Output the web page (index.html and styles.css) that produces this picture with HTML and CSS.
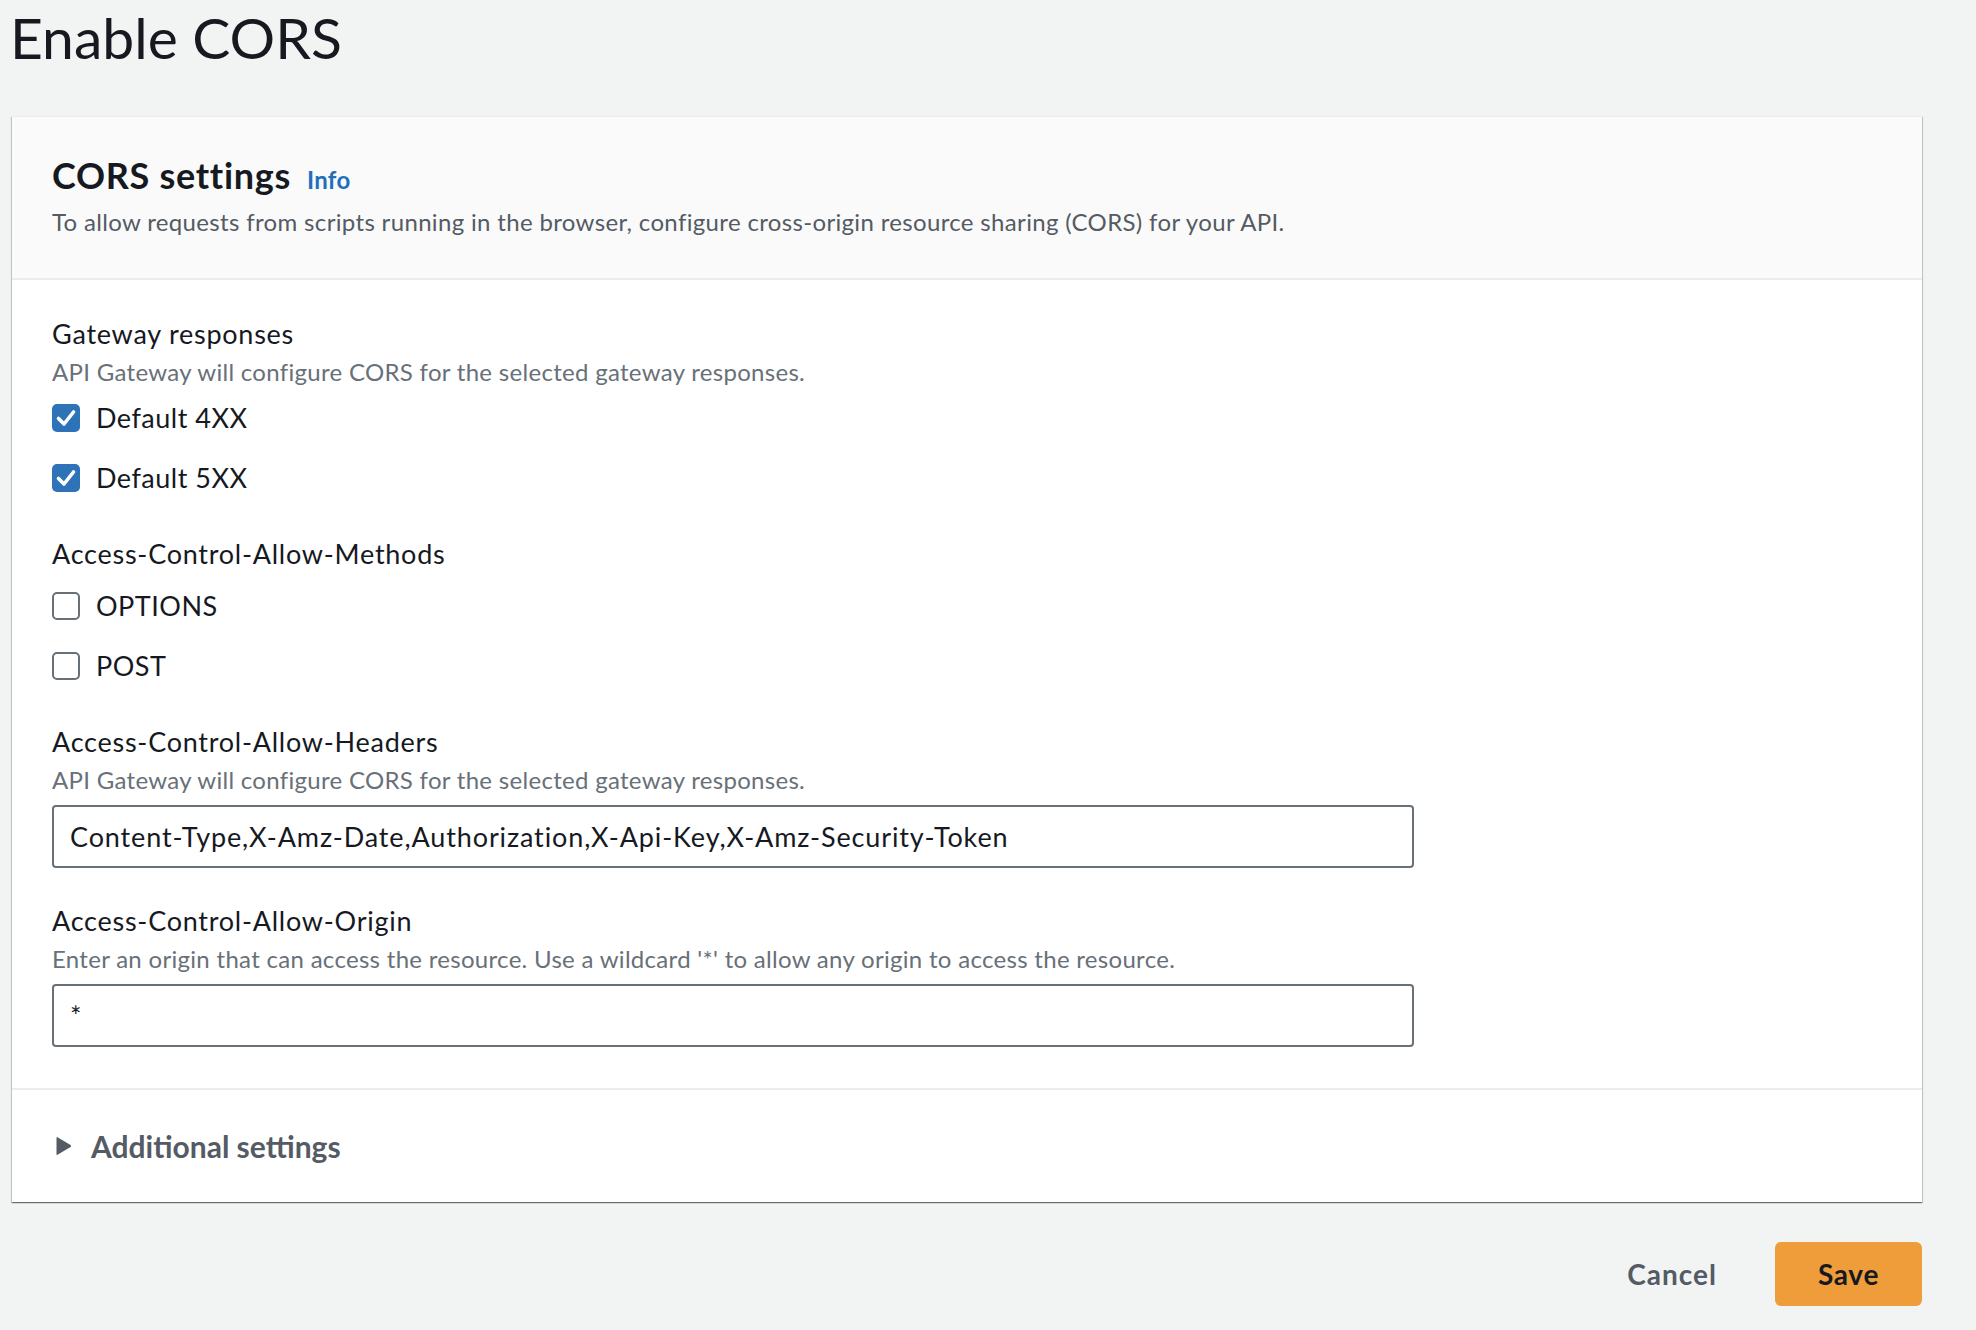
FILE: index.html
```html
<!DOCTYPE html>
<html lang="en">
<head>
<meta charset="utf-8">
<title>Enable CORS</title>
<link rel="stylesheet" href="styles.css">
</head>
<body>
<div class="page">
  <h1 class="title">Enable CORS</h1>

  <section class="card">
    <header class="card-header">
      <h2 class="card-title"><span>CORS settings</span><a class="info" href="#">Info</a></h2>
      <p class="card-desc">To allow requests from scripts running in the browser, configure cross-origin resource sharing (CORS) for your API.</p>
    </header>

    <div class="card-body">
      <div class="field field-first">
        <div class="label">Gateway responses</div>
        <div class="hint">API Gateway will configure CORS for the selected gateway responses.</div>
        <div class="checks checks-hinted">
          <label class="check">
            <span class="box box-checked"><svg viewBox="0 0 28 28" width="28" height="28"><polyline points="6.5,14.5 12,20 21.5,8" fill="none" stroke="#fff" stroke-width="3.6" stroke-linecap="round" stroke-linejoin="round"/></svg></span>
            <span class="check-text">Default 4XX</span>
          </label>
          <label class="check">
            <span class="box box-checked"><svg viewBox="0 0 28 28" width="28" height="28"><polyline points="6.5,14.5 12,20 21.5,8" fill="none" stroke="#fff" stroke-width="3.6" stroke-linecap="round" stroke-linejoin="round"/></svg></span>
            <span class="check-text">Default 5XX</span>
          </label>
        </div>
      </div>

      <div class="field field-gap">
        <div class="label">Access-Control-Allow-Methods</div>
        <div class="checks checks-plain">
          <label class="check">
            <span class="box"></span>
            <span class="check-text">OPTIONS</span>
          </label>
          <label class="check">
            <span class="box"></span>
            <span class="check-text">POST</span>
          </label>
        </div>
      </div>

      <div class="field field-gap">
        <div class="label">Access-Control-Allow-Headers</div>
        <div class="hint">API Gateway will configure CORS for the selected gateway responses.</div>
        <div class="input">Content-Type,X-Amz-Date,Authorization,X-Api-Key,X-Amz-Security-Token</div>
      </div>

      <div class="field field-after-input">
        <div class="label">Access-Control-Allow-Origin</div>
        <div class="hint">Enter an origin that can access the resource. Use a wildcard '*' to allow any origin to access the resource.</div>
        <div class="input">*</div>
      </div>
    </div>

    <div class="card-footer">
      <div class="expander">
        <svg class="caret" viewBox="0 0 16 20" width="16" height="20"><path d="M1.5 1.2 L14.6 9 Q15.6 10 14.6 11 L1.5 18.8 Q0.5 19.3 0.5 18 L0.5 2 Q0.5 0.7 1.5 1.2 Z" fill="#545b64"/></svg>
        <span class="expander-text">Additional settings</span>
      </div>
    </div>
  </section>

  <div class="actions">
    <button class="btn btn-link" type="button">Cancel</button>
    <button class="btn btn-primary" type="button">Save</button>
  </div>
</div>
</body>
</html>
```

FILE: styles.css
```css
* { box-sizing: border-box; }

html, body {
  margin: 0;
  padding: 0;
  background: #f2f3f3;
}

body {
  font-family: Lato, "Open Sans", "Noto Sans", sans-serif;
  color: #16191f;
}

.page {
  padding: 5px 54px 0 12px;
}

.title {
  margin: 0 0 47px -2px;
  font-size: 57px;
  line-height: 64px;
  font-weight: 400;
  color: #16191f;
}

.card {
  background: #ffffff;
  border-top: 1px solid #eaeded;
  box-shadow: 0 1px 1px 0 rgba(0, 28, 36, 0.45), 1px 1px 1px 0 rgba(0, 28, 36, 0.15), -1px 1px 1px 0 rgba(0, 28, 36, 0.15);
}

.card-header {
  background: #fafafa;
  padding: 36px 40px 40px 40px;
  border-bottom: 2px solid #eaeded;
}

.card-title {
  margin: 0;
  display: flex;
  align-items: baseline;
  font-size: 36px;
  line-height: 44px;
  font-weight: 700;
  letter-spacing: 0.7px;
  color: #16191f;
}

.info {
  margin-left: 16px;
  font-size: 24px;
  font-weight: 700;
  letter-spacing: 0.3px;
  color: #1f6fbd;
  text-decoration: none;
}

.card-desc {
  margin: 4px 0 0 0;
  font-size: 24px;
  line-height: 32px;
  letter-spacing: 0.34px;
  color: #545b64;
}

.card-body {
  padding: 38px 40px 41px 40px;
  border-bottom: 2px solid #eaeded;
}

.label {
  font-size: 27px;
  line-height: 32px;
  letter-spacing: 0.75px;
  color: #16191f;
}

.hint {
  margin-top: 7px;
  font-size: 24px;
  line-height: 30px;
  letter-spacing: 0.3px;
  color: #687078;
}

.field-gap {
  margin-top: 42px;
}

.field-after-input {
  margin-top: 37px;
}

.checks {
  display: flex;
  flex-direction: column;
  gap: 24px;
}

.checks-hinted {
  margin-top: 13px;
}

.checks-plain {
  margin-top: 18px;
}

.check {
  display: flex;
  align-items: center;
  height: 36px;
}

.box {
  width: 28px;
  height: 28px;
  border: 2px solid #687078;
  border-radius: 5px;
  background: #ffffff;
  flex: 0 0 auto;
  display: flex;
}

.box-checked {
  border: none;
  background: #2e73b8;
}

.check-text {
  margin-left: 16px;
  font-size: 27px;
  line-height: 36px;
  letter-spacing: 0.5px;
  color: #16191f;
}

.input {
  margin-top: 10px;
  width: 1362px;
  height: 63px;
  border: 2px solid #687078;
  border-radius: 4px;
  background: #ffffff;
  padding: 0 16px;
  display: flex;
  align-items: center;
  font-size: 27px;
  line-height: 36px;
  letter-spacing: 0.87px;
  color: #16191f;
}

.card-footer {
  padding: 38px 40px 38px 44px;
}

.expander {
  display: flex;
  align-items: center;
  height: 36px;
}

.caret {
  flex: 0 0 auto;
}

.expander-text {
  margin-left: 19px;
  font-size: 30px;
  line-height: 36px;
  font-weight: 700;
  color: #545b64;
}

.actions {
  margin-top: 40px;
  display: flex;
  justify-content: flex-end;
  align-items: center;
}

.btn {
  font-family: inherit;
  font-size: 28px;
  font-weight: 700;
  border: none;
  height: 64px;
  border-radius: 6px;
  cursor: pointer;
}

.btn-link {
  background: transparent;
  color: #545b64;
  padding: 0 20px;
  margin-right: 38px;
  letter-spacing: 1px;
}

.btn-primary {
  background: #ef9d3b;
  color: #16191f;
  width: 147px;
  padding: 0;
  letter-spacing: 0.7px;
}
```
